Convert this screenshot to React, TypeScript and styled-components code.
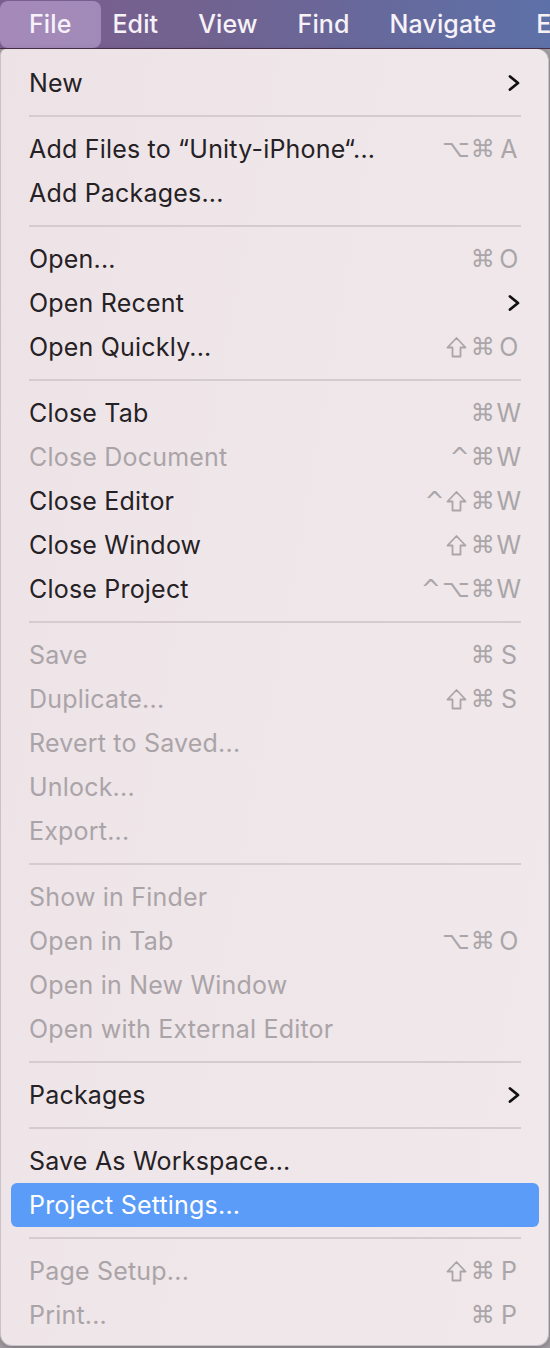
import styled, { createGlobalStyle } from 'styled-components';

type MenuItem =
  | { kind: 'separator' }
  | {
      kind: 'item';
      label: string;
      mods?: string;
      keyChar?: string;
      submenu?: boolean;
      disabled?: boolean;
      active?: boolean;
    };

const sep: MenuItem = { kind: 'separator' };
const item = (
  label: string,
  opts: { mods?: string; keyChar?: string; submenu?: boolean; disabled?: boolean; active?: boolean } = {},
): MenuItem => ({ kind: 'item', label, ...opts });

const menuItems: MenuItem[] = [
  item('New', { submenu: true }),
  sep,
  item('Add Files to “Unity-iPhone“...', { mods: '⌥⌘', keyChar: 'A' }),
  item('Add Packages...'),
  sep,
  item('Open...', { mods: '⌘', keyChar: 'O' }),
  item('Open Recent', { submenu: true }),
  item('Open Quickly...', { mods: '⇧⌘', keyChar: 'O' }),
  sep,
  item('Close Tab', { mods: '⌘', keyChar: 'W' }),
  item('Close Document', { mods: '^⌘', keyChar: 'W', disabled: true }),
  item('Close Editor', { mods: '^⇧⌘', keyChar: 'W' }),
  item('Close Window', { mods: '⇧⌘', keyChar: 'W' }),
  item('Close Project', { mods: '^⌥⌘', keyChar: 'W' }),
  sep,
  item('Save', { mods: '⌘', keyChar: 'S', disabled: true }),
  item('Duplicate...', { mods: '⇧⌘', keyChar: 'S', disabled: true }),
  item('Revert to Saved...', { disabled: true }),
  item('Unlock...', { disabled: true }),
  item('Export...', { disabled: true }),
  sep,
  item('Show in Finder', { disabled: true }),
  item('Open in Tab', { mods: '⌥⌘', keyChar: 'O', disabled: true }),
  item('Open in New Window', { disabled: true }),
  item('Open with External Editor', { disabled: true }),
  sep,
  item('Packages', { submenu: true }),
  sep,
  item('Save As Workspace...'),
  item('Project Settings...', { active: true }),
  sep,
  item('Page Setup...', { mods: '⇧⌘', keyChar: 'P', disabled: true }),
  item('Print...', { mods: '⌘', keyChar: 'P', disabled: true }),
];

const menuBarTitles = ['File', 'Edit', 'View', 'Find', 'Navigate', 'Editor'];

const GlobalStyle = createGlobalStyle`
  html, body {
    margin: 0;
    padding: 0;
    background: #a29ea3;
  }
  body {
    font-family: Inter, "Liberation Sans", sans-serif;
    -webkit-font-smoothing: antialiased;
  }
`;

const Screen = styled.div`
  width: 550px;
  height: 1348px;
  overflow: hidden;
  display: flex;
  flex-direction: column;
  background: #a29ea3;
`;

const MenuBar = styled.div`
  height: 48px;
  flex-shrink: 0;
  display: flex;
  align-items: center;
  background: linear-gradient(90deg, #7b5e90 0%, #72628f 35%, #66699c 70%, #5d71a8 100%);
  border-bottom: 1px solid #4b2f48;
  white-space: nowrap;
  overflow: hidden;
`;

// the open menu's title gets a wider, highlighted box
const MenuTitle = styled.div<{ $open?: boolean }>`
  height: 47px;
  display: flex;
  align-items: center;
  flex-shrink: 0;
  padding: ${(p) => (p.$open ? '0 30px 0 29px' : '0 20px')};
  margin-right: ${(p) => (p.$open ? '-9px' : '0')};
  border-radius: 8px;
  font-size: 25px;
  font-weight: 500;
  letter-spacing: 0.1px;
  color: #f6f2f8;
  background: ${(p) => (p.$open ? 'rgba(214, 190, 236, 0.45)' : 'transparent')};
`;

const Panel = styled.div`
  width: 549px;
  height: 1297px;
  flex-shrink: 0;
  box-sizing: border-box;
  padding: 12px 0 8px;
  background: linear-gradient(100deg, #ede3e6 0%, #efe6e9 40%, #f0e8ea 100%);
  border: 1px solid #c9c2c7;
  border-top: none;
  border-radius: 6px 12px 12px 12px;
  box-shadow: 0 2px 6px rgba(0, 0, 0, 0.25);
`;

const Row = styled.div<{ $disabled?: boolean; $active?: boolean }>`
  height: 44px;
  margin: 0 9px 0 10px;
  padding: 0 20px 0 18px;
  display: flex;
  align-items: center;
  border-radius: 6px;
  font-size: 25px;
  letter-spacing: 0.2px;
  color: ${(p) => (p.$active ? '#ffffff' : p.$disabled ? '#aaa4a8' : '#252125')};
  background: ${(p) => (p.$active ? '#5b9cf8' : 'transparent')};
`;

const Label = styled.span`
  flex: 1;
  white-space: nowrap;
`;

const Shortcut = styled.span`
  display: flex;
  align-items: center;
  color: #aaa5a8;
`;

const Modifier = styled.span`
  font-family: "DejaVu Sans", sans-serif;
  font-size: 24px;
  margin-left: 1px;
`;

const ShiftIcon = styled.svg`
  width: 21px;
  height: 22px;
  margin: 0 3px 0 1px;
`;

const KeyChar = styled.span`
  width: 28px;
  margin-right: -4px;
  text-align: center;
  font-size: 25px;
`;

const Chevron = styled.svg`
  width: 14px;
  height: 18px;
  margin-right: -2px;
`;

const Separator = styled.div`
  height: 22px;
  display: flex;
  align-items: center;
  padding: 0 27px 0 28px;
  &::after {
    content: '';
    flex: 1;
    height: 2px;
    background: #d4ccd0;
  }
`;

const renderModifier = (mod: string, i: number) =>
  mod === '⇧' ? (
    <ShiftIcon key={i} viewBox="0 0 21 22">
      <path
        d="M10.5 2 L19.5 11.5 H14.5 V20.5 H6.5 V11.5 H1.5 Z"
        fill="none"
        stroke="currentColor"
        strokeWidth="1.8"
        strokeLinejoin="round"
      />
    </ShiftIcon>
  ) : (
    <Modifier key={i}>{mod}</Modifier>
  );

const renderItem = (entry: MenuItem, index: number) => {
  if (entry.kind === 'separator') {
    return <Separator key={index} />;
  }
  return (
    <Row key={index} $disabled={entry.disabled} $active={entry.active}>
      <Label>{entry.label}</Label>
      {entry.keyChar && (
        <Shortcut>
          {Array.from(entry.mods ?? '').map(renderModifier)}
          <KeyChar>{entry.keyChar}</KeyChar>
        </Shortcut>
      )}
      {entry.submenu && (
        <Chevron viewBox="0 0 14 18">
          <path
            d="M3 2.5 L11 9 L3 15.5"
            fill="none"
            stroke="#111"
            strokeWidth="2.8"
            strokeLinecap="round"
            strokeLinejoin="round"
          />
        </Chevron>
      )}
    </Row>
  );
};

export default function App() {
  return (
    <>
      <GlobalStyle />
      <Screen>
        <MenuBar>
          {menuBarTitles.map((title, i) => (
            <MenuTitle key={title} $open={i === 0}>
              {title}
            </MenuTitle>
          ))}
        </MenuBar>
        <Panel>{menuItems.map(renderItem)}</Panel>
      </Screen>
    </>
  );
}
